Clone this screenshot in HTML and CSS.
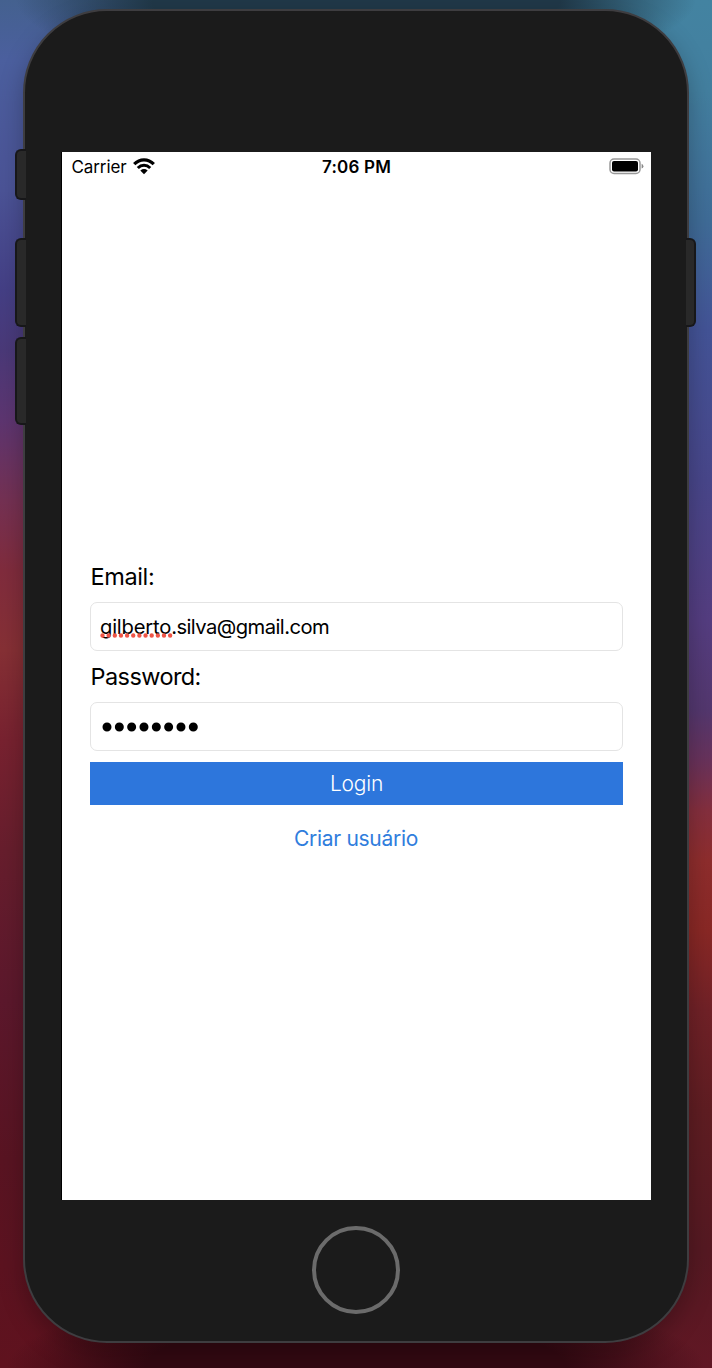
FILE: index.html
```html
<!DOCTYPE html>
<html lang="pt-BR">
<head>
<meta charset="utf-8">
<title>Login</title>
<link rel="stylesheet" href="styles.css">
</head>
<body>
<main class="desktop">
  <div class="phone">
    <i class="key mute"></i><i class="key volume-up"></i><i class="key volume-down"></i><i class="key power"></i>
    <section class="screen">
      <header class="status">
        <div class="network"><span class="carrier">Carrier</span>
          <svg class="wifi" width="22" height="17" viewBox="0 0 22 17" fill="none" stroke="#000"><path stroke-width="3.2" d="M1.2 6.2C6.8.5 15.2.5 20.8 6.2"/><path stroke-width="3" d="M4.8 10C8.4 6.4 13.6 6.4 17.2 10"/><path fill="#000" stroke="none" d="M7.3 12.5Q11 9.6 14.7 12.5L11 16.2Z"/></svg>
        </div>
        <time class="clock">7:06 PM</time>
        <svg class="battery" width="35" height="17" viewBox="0 0 35 17"><rect x="1" y="1" width="30" height="14.5" rx="4" fill="none" stroke="#999" stroke-width="1.5"/><rect x="3" y="3" width="26" height="10.5" rx="2" fill="#000"/><path d="M32.6 5.8q1.8.6 1.8 2.4t-1.8 2.4z" fill="#888"/></svg>
      </header>
      <form class="form">
        <label class="label">Email:</label>
        <div class="field"><span class="email"><span class="misspelled">gilberto<svg class="dots" width="73" height="5"><path d="M2.5 2.5H71" stroke="#ef5547" stroke-width="4.4" stroke-linecap="round" stroke-dasharray="0 6.15"/></svg></span>.silva@gmail.com</span></div>
        <label class="label password-label">Password:</label>
        <div class="field password"><svg width="98" height="10"><path d="M5 5H92" stroke="#000" stroke-width="9" stroke-linecap="round" stroke-dasharray="0 12.33"/></svg></div>
        <button class="login" type="button">Login</button>
        <a class="create">Criar usuário</a>
      </form>
    </section>
    <div class="home"></div>
  </div>
</main>
</body>
</html>
```
FILE: styles.css
```css
* { box-sizing: border-box; }
body { margin: 0; font-family: Inter, "Liberation Sans", sans-serif; color: #000; }
.desktop {
  width: 712px; height: 1368px; overflow: hidden; padding: 9px 23px 25px;
  background:
    radial-gradient(ellipse 340px 80px at 50% 0, #203848 60%, transparent 100%),
    radial-gradient(ellipse 350px 80px at 50% 100%, #330912 60%, transparent 100%),
    linear-gradient(#44618f 0, #4b5f9e 60px, #4b5396 190px, #443f85 290px, #4a3978 350px, #5d3570 420px, #743153 500px, #802c3d 570px, #863035 650px, #782230 740px, #671e2d 850px, #5c182c 1000px, #591422 1160px, #5f121e 1368px) left / 50% 100% no-repeat,
    linear-gradient(#4383a1 0, #437f9f 90px, #3f6c97 220px, #435396 330px, #48468a 480px, #543d80 620px, #53376e 710px, #68325b 760px, #842f3e 810px, #8e2d2d 860px, #892825 930px, #702127 1010px, #5f1d22 1110px, #551922 1250px, #611724 1368px) right / 50% 100% no-repeat;
}
.phone {
  position: relative; width: 666px; height: 1334px; padding: 141px 36px 27px;
  border: 2px solid #3e3d40; border-radius: 84px; background: #1b1b1b;
  box-shadow: 0 10px 24px rgba(0, 0, 0, .26);
  display: flex; flex-direction: column; align-items: center;
}
.key { position: absolute; left: -10px; width: 11px; background: #292929; border: 2px solid #171719; border-right: 0; border-radius: 6px 0 0 6px; }
.mute { top: 138px; height: 51px; }
.volume-up { top: 227px; height: 89px; }
.volume-down { top: 326px; height: 88px; }
.power { top: 227px; left: auto; right: -9px; width: 10px; height: 89px; border: 2px solid #171719; border-left: 0; border-radius: 0 6px 6px 0; }
.screen { width: 589px; height: 1048px; flex: none; align-self: flex-end; background: #fff; box-shadow: -1px 0 #000; }
.status { height: 30px; padding: 0 7px 0 10px; display: grid; grid-template-columns: 1fr auto 1fr; align-items: center; }
.network { display: flex; align-items: center; gap: 6px; margin-left: -.5px; }
.wifi { margin-top: -2px; }
.carrier { font-size: 17px; letter-spacing: -.1px; line-height: 30px; }
.clock { font-size: 17px; font-weight: 600; line-height: 30px; letter-spacing: .2px; margin-left: -3px; }
.battery { justify-self: end; margin-top: -2px; }
.form { padding: 375px 28px 0; display: flex; flex-direction: column; }
.label { height: 40px; line-height: 40px; font-size: 23.5px; padding-left: .6px; letter-spacing: -.4px; }
.password-label { letter-spacing: -.6px; }
.field { height: 49px; margin: 5px 0 6px; border: 1px solid #e4e4e4; border-radius: 7px; padding: 0 9px; display: flex; align-items: center; }
.email { font-size: 20.2px; line-height: 48px; letter-spacing: -.55px; }
.misspelled { position: relative; letter-spacing: -.2px; }
.dots { position: absolute; left: 0; bottom: 1px; }
.password { padding-left: 10.5px; }
.login { height: 43px; margin-top: 5px; border: 0; padding: 0; background: #2d76dc; color: #fff; font: 300 21px/44px Inter, sans-serif; letter-spacing: -.2px; }
.create { align-self: center; margin: 12px 0 0 -1px; height: 42px; color: #2f7ddd; font-size: 21px; line-height: 43px; letter-spacing: -.3px; }
.home { flex: none; align-self: center; width: 88px; height: 88px; margin: 26px 0 0 -1px; border: 4px solid #6b6b6b; border-radius: 50%; }
```
